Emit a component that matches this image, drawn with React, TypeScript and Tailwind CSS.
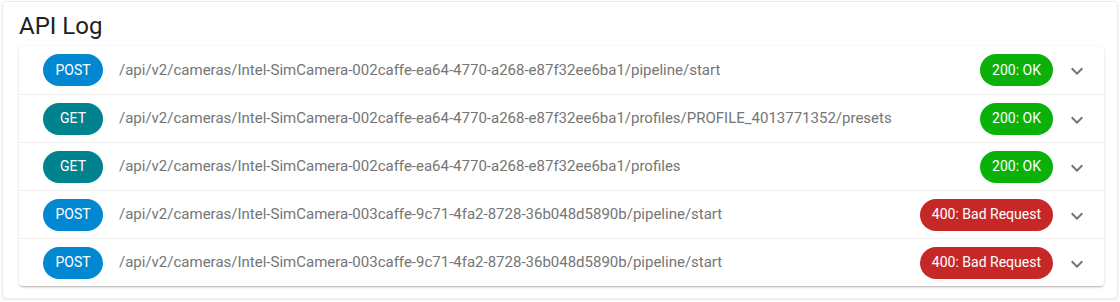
import React from "react";

type Row = { method: "POST" | "GET"; path: string; status: string; ok: boolean };

const rows: Row[] = [
  { method: "POST", path: "/api/v2/cameras/Intel-SimCamera-002caffe-ea64-4770-a268-e87f32ee6ba1/pipeline/start", status: "200: OK", ok: true },
  { method: "GET", path: "/api/v2/cameras/Intel-SimCamera-002caffe-ea64-4770-a268-e87f32ee6ba1/profiles/PROFILE_4013771352/presets", status: "200: OK", ok: true },
  { method: "GET", path: "/api/v2/cameras/Intel-SimCamera-002caffe-ea64-4770-a268-e87f32ee6ba1/profiles", status: "200: OK", ok: true },
  { method: "POST", path: "/api/v2/cameras/Intel-SimCamera-003caffe-9c71-4fa2-8728-36b048d5890b/pipeline/start", status: "400: Bad Request", ok: false },
  { method: "POST", path: "/api/v2/cameras/Intel-SimCamera-003caffe-9c71-4fa2-8728-36b048d5890b/pipeline/start", status: "400: Bad Request", ok: false },
];

function Chevron() {
  return (
    <svg width="24" height="24" viewBox="0 0 24 24" className="shrink-0">
      <path d="M7.41 8.59 12 13.17l4.59-4.58L18 10l-6 6-6-6 1.41-1.41z" fill="#757575" />
    </svg>
  );
}

export default function App() {
  return (
    <div className="w-[1120px] h-[302px] bg-white pl-[2px] pt-[1px] pr-[2px] font-['Roboto',sans-serif]">
      <div className="h-[298px] rounded-[4px] bg-white border border-[#ececec] shadow-[0_1px_3px_rgba(0,0,0,0.08)] pl-[16px] pr-[13px] pt-[8px]">
        <div className="h-[32px] leading-[32px] text-[24px] text-[#212121] mb-[4px]">API Log</div>
        <div className="rounded-[4px] bg-white shadow-[0_2px_2px_-1px_rgba(0,0,0,0.2),0_1px_3px_0_rgba(0,0,0,0.12),0_0_1px_rgba(0,0,0,0.1)]">
          {rows.map((r, i) => (
            <div
              key={i}
              className={`h-[48px] flex items-center pl-[24px] pr-[15px] ${i > 0 ? "border-t border-[#efefef]" : ""}`}
            >
              <span
                className={`h-[32px] w-[60px] shrink-0 rounded-full flex items-center justify-center text-[14px] text-white ${
                  r.method === "POST" ? "bg-[#0288d1]" : "bg-[#00838f]"
                }`}
              >
                {r.method}
              </span>
              <span className="ml-[16px] flex-1 text-[15px] text-[#757575] whitespace-nowrap">{r.path}</span>
              <span
                className={`h-[32px] px-[12px] shrink-0 rounded-full flex items-center text-[14px] text-white ${
                  r.ok ? "bg-[#0bb00b]" : "bg-[#c62828]"
                }`}
              >
                {r.status}
              </span>
              <span className="ml-[12px] mt-[2px]">
                <Chevron />
              </span>
            </div>
          ))}
        </div>
      </div>
    </div>
  );
}
